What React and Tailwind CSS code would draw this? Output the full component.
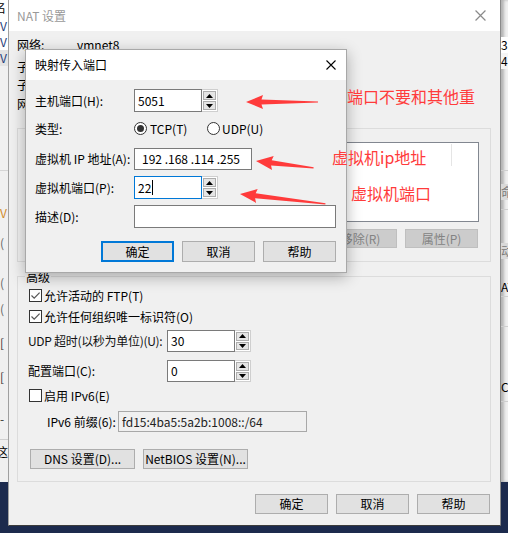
import React from 'react'

const RED = '#ff3b3b'

function CloseIcon({ color = '#000', size = 10 }) {
  return (
    <svg width={size} height={size} viewBox="0 0 10 10">
      <path d="M0.5 0.5 L9.5 9.5 M9.5 0.5 L0.5 9.5" stroke={color} strokeWidth="1.1" fill="none" />
    </svg>
  )
}

function Tri({ down }) {
  return (
    <svg width="7" height="4" viewBox="0 0 7 4">
      <path d={down ? 'M0 0 L7 0 L3.5 4 Z' : 'M3.5 0 L7 4 L0 4 Z'} fill="#000" />
    </svg>
  )
}

function Spinner() {
  return (
    <div className="flex h-full w-[16px] flex-col gap-[1px] border border-l-0 border-[#cfcfcf] bg-white p-[1px]">
      <div className="flex flex-1 items-center justify-center border border-[#adadad] bg-[#e5e5e5]">
        <Tri />
      </div>
      <div className="flex flex-1 items-center justify-center border border-[#adadad] bg-[#e5e5e5]">
        <Tri down />
      </div>
    </div>
  )
}

function SpinInput({ value, focused, caret }) {
  return (
    <div className="flex h-full">
      <div
        className={`flex w-[68px] items-center border bg-white pl-[3px] text-[12px] text-black ${
          focused ? 'border-[#0078d7]' : 'border-[#7a7a7a]'
        }`}
      >
        {value}
        {caret ? <span className="ml-[1px] h-[15px] w-[1px] bg-black" /> : null}
      </div>
      <Spinner />
    </div>
  )
}

function Checkbox({ checked }) {
  return (
    <span className="flex h-[13px] w-[13px] shrink-0 items-center justify-center border border-[#333] bg-white">
      {checked ? (
        <svg width="11" height="11" viewBox="0 0 11 11">
          <path d="M1.5 5.5 L4.2 8.2 L9.6 2.6" stroke="#555" strokeWidth="1.2" fill="none" />
        </svg>
      ) : null}
    </span>
  )
}

function Radio({ checked }) {
  return (
    <span className="flex h-[13px] w-[13px] shrink-0 items-center justify-center rounded-full border border-[#333] bg-white">
      {checked ? <span className="h-[7px] w-[7px] rounded-full bg-[#333]" /> : null}
    </span>
  )
}

function Btn({ children, width = 'w-[73px]', primary, disabled }) {
  let look = 'border border-[#adadad] bg-[#e1e1e1] text-black'
  if (primary) look = 'border-2 border-[#0078d7] bg-[#e1e1e1] text-black'
  if (disabled) look = 'border border-[#bfbfbf] bg-[#cccccc] text-[#838383]'
  return (
    <div className={`flex h-full items-center justify-center whitespace-nowrap text-[12px] ${width} ${look}`}>
      {children}
    </div>
  )
}

function Arrow({ x, y, len, angle }) {
  return (
    <polygon
      transform={`translate(${x} ${y}) rotate(${angle})`}
      points={`0,0 17,-7 15.5,-2.6 ${len},-0.6 ${len},0.6 15.5,2.6 17,7`}
      fill={RED}
    />
  )
}

function LeftStrip() {
  return (
    <div className="absolute left-0 top-0 flex h-[482px] w-[8px] flex-col overflow-hidden bg-[#f0f0f0] text-[12px] leading-[16px]">
      <div className="h-[18px] bg-white text-black">
        <span className="-ml-[6px]">名</span>
      </div>
      <div className="h-[16px] bg-white text-[#1f3c7a]">V</div>
      <div className="h-[16px] bg-white text-[#1f3c7a]">V</div>
      <div className="h-[16px] bg-[#e3e3e3] text-[#1f3c7a]">V</div>
      <div className="h-[104px]" />
      <div className="h-[1px] bg-[#d5d5d5]" />
      <div className="mt-[34px] text-[#d08a2a]">V</div>
      <div className="mt-[14px] text-[#666]">(</div>
      <div className="mt-[24px] text-[#666]">(</div>
      <div className="mt-[10px] text-[#666]">(</div>
      <div className="mt-[18px] text-[#333]">[</div>
      <div className="mt-[18px] text-[#333]">[</div>
      <div className="mt-[26px] text-[#333]">-</div>
      <div className="mt-[12px] h-[1px] bg-[#cfcfcf]" />
      <div className="mt-[4px] -ml-[4px] text-black">这</div>
    </div>
  )
}

function RightStrip() {
  return (
    <div className="absolute left-[501px] top-0 flex h-[482px] w-[7px] flex-col overflow-hidden bg-[#f0f0f0] text-[12px] leading-[16px] shadow-[inset_3px_0_3px_rgba(0,0,0,0.25)]">
      <div className="h-[37px]" />
      <div className="h-[16px] bg-white text-black">3.</div>
      <div className="h-[16px] bg-[#f5f5f5] text-black">4.</div>
      <div className="h-[101px]" />
      <div className="h-[1px] bg-[#cfcfcf]" />
      <div className="mt-[13px] h-[16px] bg-[#d9d9d9] text-[#777]">命</div>
      <div className="mt-[9px] h-[1px] bg-[#cfcfcf]" />
      <div className="mt-[33px] h-[16px] bg-[#d9d9d9] text-[#777]">动</div>
      <div className="mt-[20px] h-[16px] text-black">AT</div>
      <div className="mt-[1px] h-[1px] bg-[#cfcfcf]" />
      <div className="mt-[29px] h-[1px] bg-[#cfcfcf]" />
      <div className="mt-[52px] h-[16px] text-black">CF</div>
      <div className="mt-[6px] h-[1px] bg-[#cfcfcf]" />
    </div>
  )
}

function GroupBox({ label, className, children }) {
  return (
    <div className={`relative border border-[#dcdcdc] ${className}`}>
      {label ? (
        <span className="absolute -top-[8px] left-[7px] bg-[#f0f0f0] px-[1px] text-[12px] leading-[16px] text-black">
          {label}
        </span>
      ) : null}
      {children}
    </div>
  )
}

function NatDialog() {
  return (
    <div className="absolute left-[8px] top-0 flex h-[526px] w-[493px] flex-col border-x border-b border-l-[#a0a0a0] border-r-[#8a8a8a] border-b-[#3c3c3c] bg-[#f0f0f0]">
      <div className="flex h-[31px] shrink-0 items-center justify-between bg-white pl-[8px] pr-[14px] text-[12px] text-[#999]">
        <span>NAT 设置</span>
        <CloseIcon color="#8a8a8a" size={11} />
      </div>
      <div className="flex flex-col pl-[8px] pr-[9px] text-[12px] text-black">
        <div className="mt-[5px] flex h-[18px] items-center">
          <span className="w-[60px]">网络:</span>
          <span>vmnet8</span>
        </div>
        <div className="mt-[4px] flex h-[18px] items-center">
          <span>子网 IP:</span>
        </div>
        <div className="flex h-[18px] items-center">
          <span>子网掩码:</span>
        </div>
        <div className="mt-[1px] flex h-[18px] items-center">
          <span>网关 IP:</span>
        </div>

        {/* port forwarding box, mostly hidden under the small dialog */}
        <GroupBox className="mt-[15px] h-[134px] w-[474px]">
          <div className="ml-[9px] mr-[11px] mt-[13px] flex h-[80px] flex-col border border-[#828790] bg-white">
            <div className="flex h-[24px]">
              <div className="w-[423px]" />
              <div className="mt-[1px] h-[22px] w-[1px] bg-[#e5e5e5]" />
            </div>
          </div>
          <div className="mr-[12px] mt-[7px] flex h-[19px] justify-end gap-[8px]">
            <Btn disabled>移除(R)</Btn>
            <Btn disabled>属性(P)</Btn>
          </div>
        </GroupBox>

        <GroupBox label="高级" className="mt-[14px] h-[206px] w-[474px]">
          <div className="flex flex-col whitespace-nowrap">
            <div className="ml-[11px] mt-[12px] flex h-[13px] items-center gap-[2px]">
              <Checkbox checked />
              <span>允许活动的 FTP(T)</span>
            </div>
            <div className="ml-[11px] mt-[8px] flex h-[13px] items-center gap-[2px]">
              <Checkbox checked />
              <span>允许任何组织唯一标识符(O)</span>
            </div>
            <div className="ml-[10px] mt-[7px] flex h-[22px] items-center">
              <span className="w-[139px] tracking-[-0.3px] text-[#111]">UDP 超时(以秒为单位)(U):</span>
              <SpinInput value="30" />
            </div>
            <div className="ml-[10px] mt-[8px] flex h-[22px] items-center">
              <span className="w-[139px]">配置端口(C):</span>
              <SpinInput value="0" />
            </div>
            <div className="ml-[11px] mt-[7px] flex h-[13px] items-center gap-[2px]">
              <Checkbox />
              <span>启用 IPv6(E)</span>
            </div>
            <div className="ml-[29px] mt-[9px] flex h-[21px] items-center">
              <span className="w-[71px]">IPv6 前缀(6):</span>
              <div className="flex h-full w-[189px] items-center border border-[#a8a8a8] bg-[#f0f0f0] pl-[3px] text-[#222]">
                fd15:4ba5:5a2b:1008::/64
              </div>
            </div>
            <div className="ml-[12px] mt-[17px] flex h-[20px] gap-[8px]">
              <Btn width="w-[105px]">DNS 设置(D)...</Btn>
              <Btn width="w-[105px]">NetBIOS 设置(N)...</Btn>
            </div>
          </div>
        </GroupBox>

        <div className="mr-[1px] mt-[12px] flex h-[20px] justify-end gap-[8px]">
          <Btn>确定</Btn>
          <Btn>取消</Btn>
          <Btn>帮助</Btn>
        </div>
      </div>
    </div>
  )
}

function PortDialog() {
  return (
    <div className="absolute left-[25px] top-[49px] flex h-[224px] w-[322px] flex-col whitespace-nowrap border border-[#a8a8a8] bg-[#f0f0f0] text-[12px] text-black shadow-[0_4px_14px_rgba(0,0,0,0.3)]">
      <div className="flex h-[30px] shrink-0 items-center justify-between bg-white pl-[9px] pr-[10px]">
        <span>映射传入端口</span>
        <CloseIcon />
      </div>
      <div className="flex flex-col pl-[9px]">
        <div className="mt-[9px] flex h-[23px] items-center">
          <span className="w-[99px]">主机端口(H):</span>
          <SpinInput value="5051" />
        </div>
        <div className="mt-[10px] flex h-[13px] items-center">
          <span className="w-[99px]">类型:</span>
          <div className="flex w-[73px] items-center gap-[3px]">
            <Radio checked />
            <span>TCP(T)</span>
          </div>
          <div className="flex items-center gap-[2px]">
            <Radio />
            <span>UDP(U)</span>
          </div>
        </div>
        <div className="mt-[13px] flex h-[22px] items-center">
          <span className="w-[99px]">虚拟机 IP 地址(A):</span>
          <div className="flex h-full w-[118px] items-center whitespace-pre border border-[#7a7a7a] bg-white pl-[7px]">
            192 .168 .114 .255
          </div>
        </div>
        <div className="mt-[6px] flex h-[23px] items-center">
          <span className="w-[99px]">虚拟机端口(P):</span>
          <SpinInput value="22" focused caret />
        </div>
        <div className="mt-[6px] flex h-[23px] items-center">
          <span className="w-[99px]">描述(D):</span>
          <div className="h-full w-[202px] border border-[#7a7a7a] bg-white" />
        </div>
        <div className="mt-[13px] flex h-[21px] justify-end gap-[8px] pr-[10px]">
          <Btn primary>确定</Btn>
          <Btn>取消</Btn>
          <Btn>帮助</Btn>
        </div>
      </div>
    </div>
  )
}

export default function App() {
  return (
    <div className="relative h-[533px] w-[508px] overflow-hidden bg-[#1c2a4d] font-['Noto_Sans_CJK_SC','Noto_Sans',sans-serif] leading-[16px]">
      <LeftStrip />
      <RightStrip />
      <NatDialog />
      <PortDialog />

      <svg className="pointer-events-none absolute left-0 top-0" width="508" height="533">
        <Arrow x={246} y={102} len={72} angle={0} />
        <Arrow x={256} y={161} len={58} angle={6.9} />
        <Arrow x={240} y={194} len={86} angle={6.6} />
      </svg>

      <span className="absolute left-[347px] top-[85px] text-[16px] leading-[22px] text-[#ff3b3b]">端口不要和其他重</span>
      <span className="absolute left-[332px] top-[146px] text-[16px] leading-[22px] text-[#ff3b3b]">虚拟机ip地址</span>
      <span className="absolute left-[351px] top-[182px] text-[16px] leading-[22px] text-[#ff3b3b]">虚拟机端口</span>
    </div>
  )
}
